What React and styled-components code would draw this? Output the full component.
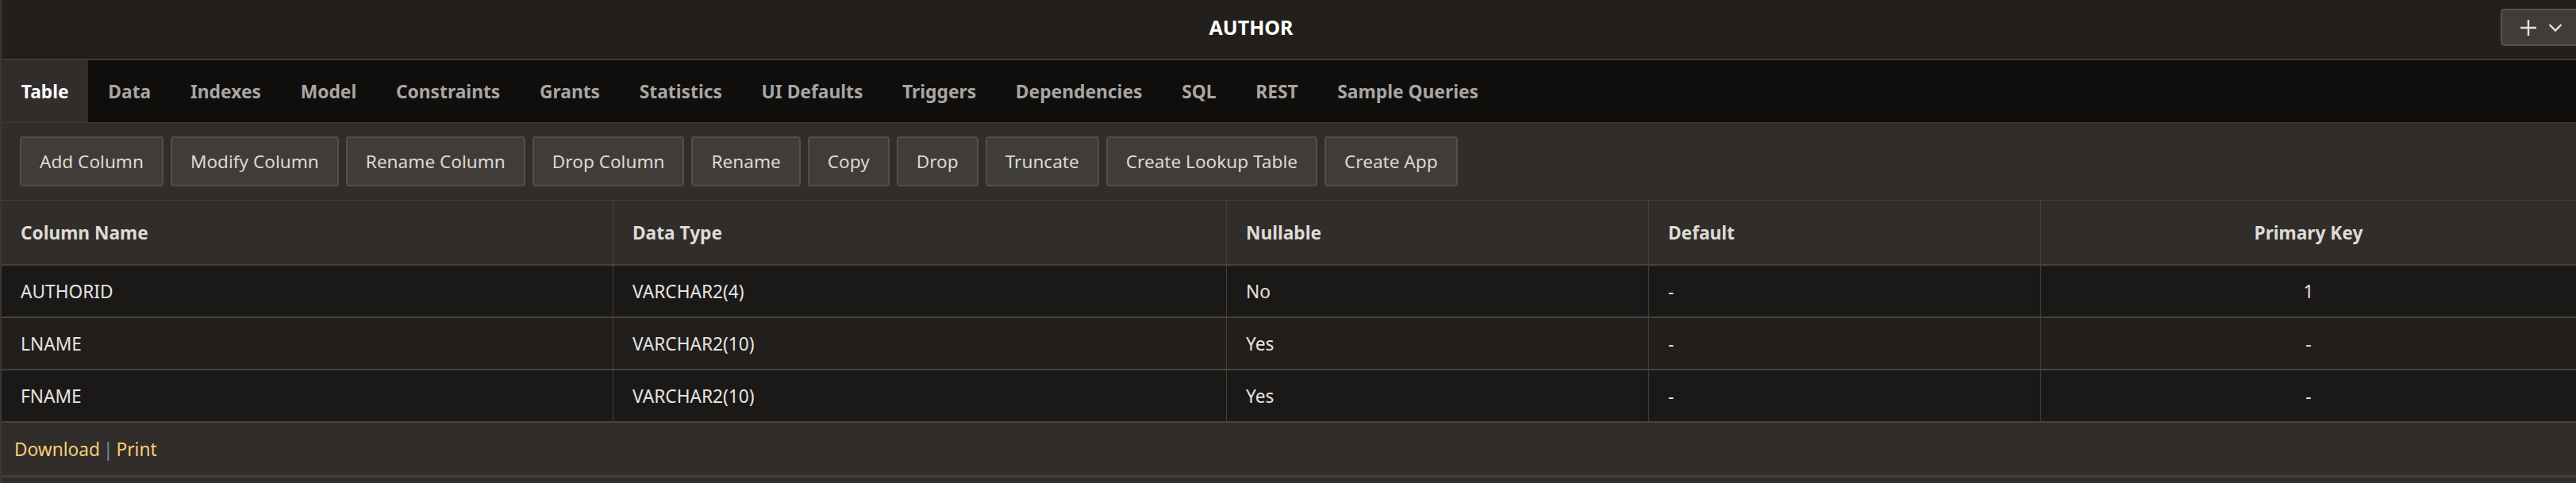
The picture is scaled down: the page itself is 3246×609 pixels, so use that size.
import React from 'react';
import styled, { createGlobalStyle } from 'styled-components';

const GlobalStyle = createGlobalStyle`
  * { box-sizing: border-box; }
  html, body { margin: 0; padding: 0; background: #312d2a; }
  body {
    font-family: "Noto Sans", "Open Sans", sans-serif;
    color: #e6e3e0;
  }
`;

const tabs = [
  'Table', 'Data', 'Indexes', 'Model', 'Constraints', 'Grants', 'Statistics',
  'UI Defaults', 'Triggers', 'Dependencies', 'SQL', 'REST', 'Sample Queries'
];

const actions = [
  'Add Column', 'Modify Column', 'Rename Column', 'Drop Column', 'Rename',
  'Copy', 'Drop', 'Truncate', 'Create Lookup Table', 'Create App'
];

const columns = [
  { name: 'Column Name', width: 770 },
  { name: 'Data Type', width: 773 },
  { name: 'Nullable', width: 532 },
  { name: 'Default', width: 494 },
  { name: 'Primary Key', center: true },
];

const rows = [
  ['AUTHORID', 'VARCHAR2(4)', 'No', '-', '1'],
  ['LNAME', 'VARCHAR2(10)', 'Yes', '-', '-'],
  ['FNAME', 'VARCHAR2(10)', 'Yes', '-', '-'],
];

const Page = styled.div`
  border-left: 2px solid #3b3734;
  min-height: 609px;
  background: #312d2a;
`;

const Header = styled.header`
  display: flex;
  align-items: flex-start;
  height: 76px;
  background: #221f1c;
  border-bottom: 2px solid #3e3a36;
`;

const Title = styled.h1`
  flex: 1;
  margin: 0;
  line-height: 69px;
  text-align: center;
  font-size: 25px;
  font-weight: 700;
  color: #ffffff;
`;

const MenuButton = styled.button`
  display: flex;
  align-items: center;
  justify-content: center;
  gap: 14px;
  width: 95px;
  height: 47px;
  margin-top: 11px;
  padding: 0 0 0 4px;
  background: #403c38;
  border: 2px solid #57534f;
  border-right: none;
  border-radius: 5px 0 0 5px;
  color: #e4e1de;
`;

const TabBar = styled.nav`
  display: flex;
  height: 79px;
  background: #100e0d;
  border-bottom: 1px solid #3e3a36;
`;

const Tab = styled.div`
  display: flex;
  align-items: center;
  padding: 0 24.85px;
  font-size: 22.8px;
  font-weight: 700;
  color: ${p => (p.$active ? '#ffffff' : '#a9a6a3')};
  background: ${p => (p.$active ? '#312d2a' : 'transparent')};
`;

const Toolbar = styled.div`
  display: flex;
  gap: 9px;
  padding: 17px 23px;
  background: #312d2a;
  border-bottom: 1px solid #45413d;
`;

const ActionButton = styled.button`
  height: 63px;
  padding: 0 23px;
  font-family: inherit;
  font-size: 22.6px;
  color: #dcd9d5;
  background: #403c38;
  border: 2px solid #524e4a;
  border-radius: 4px;
`;

const Grid = styled.table`
  width: 100%;
  table-layout: fixed;
  border-collapse: separate;
  border-spacing: 0;
`;

const HeadCell = styled.th`
  height: 82px;
  padding: 0 24px;
  text-align: ${p => (p.$center ? 'center' : 'left')};
  font-size: 22.7px;
  font-weight: 700;
  color: #dedbd7;
  background: #312d2a;
  border-bottom: 2px solid #45413d;
  & + & { border-left: 1px solid #45413d; }
`;

const Row = styled.tr`
  background: ${p => (p.$odd ? '#211e1c' : '#1b1918')};
`;

const Cell = styled.td`
  height: 66px;
  padding: 0 24px;
  text-align: ${p => (p.$center ? 'center' : 'left')};
  font-size: 22.7px;
  color: #e6e3e0;
  border-bottom: 2px solid #45413d;
  & + & { border-left: 1px solid #45413d; }
`;

const Footer = styled.div`
  display: flex;
  align-items: center;
  height: 69px;
  padding: 0 16px;
  font-size: 22.7px;
  background: #312d2a;
  border-bottom: 3px solid #423e3a;
`;

const Link = styled.a`
  color: #f3cf76;
  text-decoration: none;
`;

const Sep = styled.span`
  margin: 0 4px;
  color: #6f8fae;
`;

function PlusIcon() {
  return (
    <svg width="22" height="22" viewBox="0 0 22 22">
      <path d="M11 1v20M1 11h20" stroke="#e4e1de" strokeWidth="2.4" fill="none" />
    </svg>
  );
}

function ChevronIcon() {
  return (
    <svg width="18" height="12" viewBox="0 0 18 12">
      <path d="M1.5 2l7.5 7.5L16.5 2" stroke="#e4e1de" strokeWidth="2.4" fill="none" />
    </svg>
  );
}

export default function App() {
  return (
    <Page>
      <GlobalStyle />
      <Header>
        <Title>AUTHOR</Title>
        <MenuButton>
          <PlusIcon />
          <ChevronIcon />
        </MenuButton>
      </Header>
      <TabBar>
        {tabs.map((t, i) => (
          <Tab key={t} $active={i === 0}>{t}</Tab>
        ))}
      </TabBar>
      <Toolbar>
        {actions.map(a => (
          <ActionButton key={a}>{a}</ActionButton>
        ))}
      </Toolbar>
      <Grid>
        <colgroup>
          {columns.map(c => (
            <col key={c.name} style={c.width ? { width: c.width } : undefined} />
          ))}
        </colgroup>
        <thead>
          <tr>
            {columns.map(c => (
              <HeadCell key={c.name} $center={c.center}>{c.name}</HeadCell>
            ))}
          </tr>
        </thead>
        <tbody>
          {rows.map((r, i) => (
            <Row key={r[0]} $odd={i % 2 === 1}>
              {r.map((v, j) => (
                <Cell key={j} $center={columns[j].center}>{v}</Cell>
              ))}
            </Row>
          ))}
        </tbody>
      </Grid>
      <Footer>
        <Link href="#">Download</Link>
        <Sep>|</Sep>
        <Link href="#">Print</Link>
      </Footer>
    </Page>
  );
}
